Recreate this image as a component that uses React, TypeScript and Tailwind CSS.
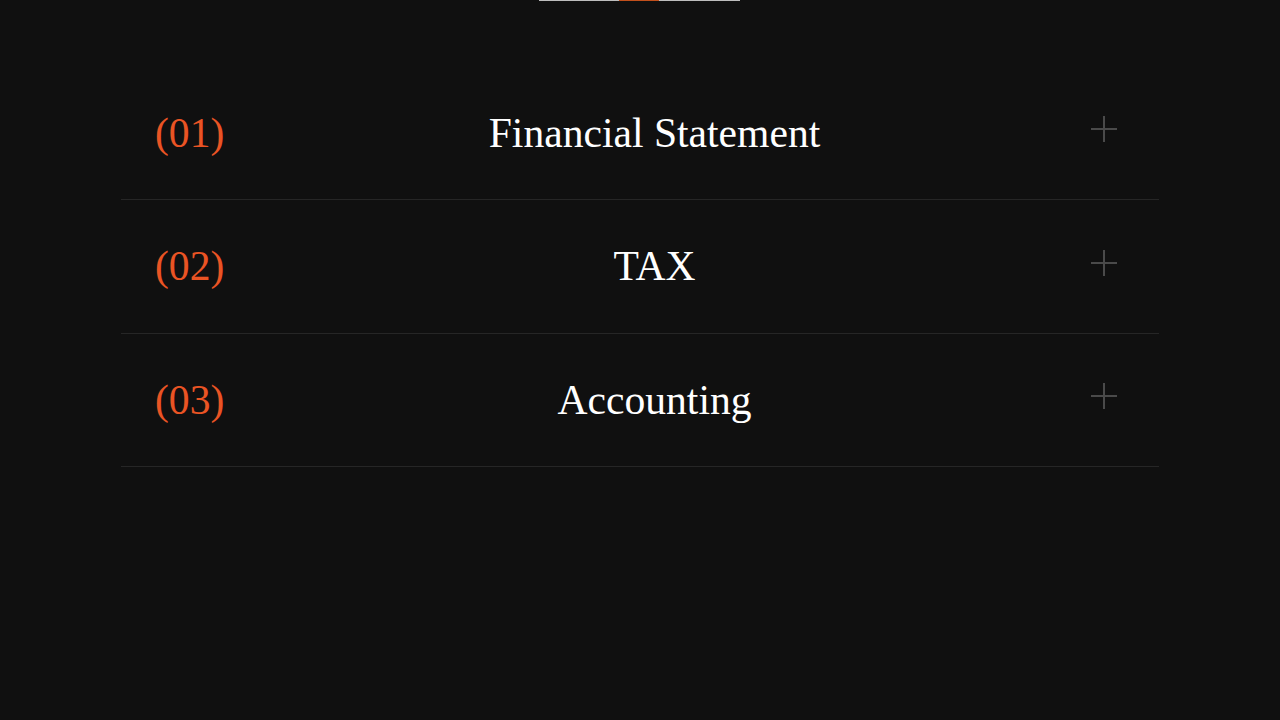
import React from 'react';

const items = [
  { no: '(01)', title: 'Financial Statement' },
  { no: '(02)', title: 'TAX' },
  { no: '(03)', title: 'Accounting' },
];

function PlusIcon() {
  return (
    <svg width="28" height="28" viewBox="0 0 28 28" fill="none" stroke="#4a4a4a" strokeWidth="2">
      <line x1="14" y1="1" x2="14" y2="27" />
      <line x1="1" y1="14" x2="27" y2="14" />
    </svg>
  );
}

export default function App() {
  return (
    <div
      className="w-full h-[720px] bg-[#101010] overflow-hidden"
      style={{ fontFamily: '"Liberation Serif", "Times New Roman", serif' }}
    >
      {/* progress strip */}
      <div className="flex justify-center pr-[2px]">
        <div className="flex w-[201px] h-px">
          <div className="w-[80px] bg-[#bdbdbd]" />
          <div className="w-[40px] bg-[#c2501c]" />
          <div className="flex-1 bg-[#bdbdbd]" />
        </div>
      </div>

      {/* accordion list */}
      <div className="mx-auto w-[1038px] mt-[66px]">
        {items.map((it) => (
          <div
            key={it.no}
            className="h-[133.4px] border-b border-[#262626] flex items-center pl-[34px] pr-[41px]"
          >
            <div className="w-[100px] text-[41.6px] leading-none text-[#ea5424] pt-px">{it.no}</div>
            <div className="flex-1 text-center text-[41.6px] leading-none text-white pt-px">{it.title}</div>
            <div className="w-[64px] flex justify-end mb-[8px]">
              <PlusIcon />
            </div>
          </div>
        ))}
      </div>
    </div>
  );
}
